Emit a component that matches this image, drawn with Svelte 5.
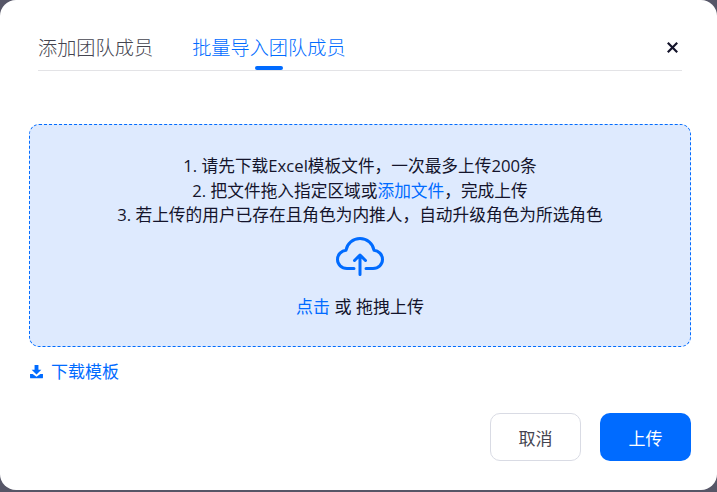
<script>
  const marks = [];
  for (let r = 0; r < 5; r++) for (let c = 0; c < 3; c++) marks.push({ x: 26 + c * 245, y: -18 + r * 122 });
  const rules = ['1. 请先下载Excel模板文件，一次最多上传200条', null, '3. 若上传的用户已存在且角色为内推人，自动升级角色为所选角色'];
</script>

<div class="backdrop">
  <div class="dialog">
    <header class="head">
      <nav class="tabs">
        <span class="tab">添加团队成员</span>
        <span class="tab active">批量导入团队成员</span>
      </nav>
      <svg class="close" viewBox="0 0 11 11" width="11" height="11" aria-label="关闭">
        <path d="M.8.8 10.200 10.200M10.200.8.8 10.200" stroke="#14142b" stroke-width="2.200" fill="none" />
      </svg>
    </header>

    <section class="drop">
      <div class="rules">
        <p>{rules[0]}</p>
        <p>2. 把文件拖入指定区域或<span class="link">添加文件</span>，完成上传</p>
        <p>{rules[2]}</p>
      </div>
      <svg class="cloud" viewBox="0 0 48 39" width="48" height="39" fill="none" stroke="#006bff" stroke-width="3" stroke-linecap="round" stroke-linejoin="round">
        <path d="M18 31.500H11C5.500 31.500 1.500 27.500 1.500 22.500 1.500 17.500 5.500 13.500 10 13.300 11 6.500 17 1.500 24 1.500 31 1.500 37 6.500 38 13.300 42.500 13.500 46.500 17.500 46.500 22.500 46.500 27.500 42.500 31.500 37 31.500H30" />
        <path d="M24 37.500V18M18.500 23.500 24 18 29.500 23.500" />
      </svg>
      <p class="hint"><span class="link">点击</span> 或 拖拽上传</p>
    </section>

    <a class="download" href="#top">
      <svg viewBox="1 1 12 13" width="13" height="14" fill="#006bff">
        <path d="M5.200 1h3.600v4.400h2.700L7 9.800 2.500 5.400h2.700z" />
        <path d="M1 9.300h2.400L7 12l3.600-2.700H13v3.200a.8.8 0 0 1-.8.8H1.800a.8.8 0 0 1-.8-.8z" />
      </svg>
      下载模板
    </a>

    <footer class="foot">
      <button class="btn ghost">取消</button>
      <button class="btn primary">上传</button>
    </footer>

    <div class="watermarks" aria-hidden="true">
      {#each marks as m}
        <div class="mark" style="left:{m.x}px;top:{m.y}px">盼盼 2025-08-19 15:24<br /><span>lipanpan</span></div>
      {/each}
    </div>
  </div>
</div>

<style>
  :global(body) {
    margin: 0;
    background: #565667;
    font-family: "Open Sans", "Noto Sans CJK SC", sans-serif;
  }
  .backdrop {
    width: 717px;
    height: 492px;
    overflow: hidden;
    background: #565667;
  }
  .dialog {
    position: relative;
    box-sizing: border-box;
    width: 717px;
    height: 490px;
    background: #fff;
    border-radius: 16px;
    padding: 0 26px 0 29px;
    overflow: hidden;
    display: flex;
    flex-direction: column;
  }
  .head {
    margin: 0 9px 0 9px;
    height: 71px;
    box-sizing: border-box;
    border-bottom: 1px solid #e3e3e6;
    display: flex;
    align-items: flex-start;
    justify-content: space-between;
    padding-right: 4px;
  }
  .tabs {
    display: flex;
    gap: 39px;
    padding-top: 34px;
  }
  .tab {
    position: relative;
    font-size: 19.200px;
    line-height: 27px;
    height: 36px;
    color: #44444f;
    font-family: "Noto Sans CJK SC", sans-serif;
    font-weight: 300;
  }
  .tab.active {
    color: #006bff;
  }
  .tab.active::after {
    content: "";
    position: absolute;
    left: 63px;
    width: 28px;
    height: 4px;
    bottom: 0;
    border-radius: 2px;
    background: #006bff;
  }
  .close {
    margin-top: 42px;
  }
  .drop {
    margin-top: 53px;
    height: 223px;
    box-sizing: border-box;
    background: #deeafe;
    border: 1px dashed #006bff;
    border-radius: 10px;
    display: flex;
    flex-direction: column;
    align-items: center;
    padding-top: 29px;
    color: #14142b;
    font-size: 16.700px;
  }
  .rules p {
    margin: 0;
    text-align: center;
    line-height: 24.500px;
  }
  .link {
    color: #006bff;
  }
  .cloud {
    margin-top: 9px;
  }
  .hint {
    margin: 19px 0 0;
    font-size: 17px;
    line-height: 24px;
  }
  .download {
    margin: 13px 0 0 1px;
    display: flex;
    align-items: center;
    gap: 8px;
    color: #006bff;
    font-size: 17px;
    line-height: 24px;
    text-decoration: none;
    font-weight: 400;
  }
  .foot {
    margin-top: 29px;
    display: flex;
    justify-content: flex-end;
    gap: 19px;
  }
  .btn {
    width: 91px;
    height: 48px;
    box-sizing: border-box;
    border-radius: 10px;
    font-family: "Noto Sans CJK SC", sans-serif;
    font-size: 17px;
    font-weight: 400;
    padding: 0;
  }
  .ghost {
    background: #fff;
    border: 1px solid #d9dbe4;
    color: #44444f;
  }
  .primary {
    background: #006bff;
    border: none;
    color: #fff;
  }
  .watermarks {
    position: absolute;
    inset: 0;
    pointer-events: none;
  }
  .mark {
    position: absolute;
    white-space: nowrap;
    font-size: 16.500px;
    line-height: 26px;
    text-align: center;
    color: rgba(30, 30, 60, 0.02);
    transform: rotate(-30deg);
    transform-origin: left top;
  }
</style>
